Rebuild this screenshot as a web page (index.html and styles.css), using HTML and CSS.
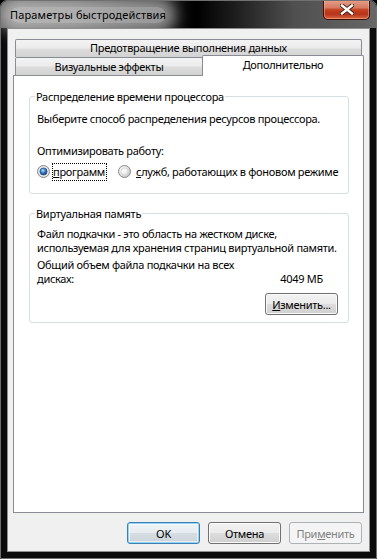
FILE: index.html
```html
<!DOCTYPE html>
<html lang="ru">
<head>
<meta charset="utf-8">
<title>Параметры быстродействия</title>
<link rel="stylesheet" href="styles.css">
</head>
<body>
<div class="window">
  <div class="titlebar">
    <span class="title">Параметры быстродействия</span>
    <div class="close">
      <svg width="14" height="11" viewBox="0 0 14 11">
        <path d="M2 1.5 L12 9.5 M12 1.5 L2 9.5" stroke="#3a1a14" stroke-width="4.2" stroke-linecap="square"/>
        <path d="M2 1.5 L12 9.5 M12 1.5 L2 9.5" stroke="#ffffff" stroke-width="2.4" stroke-linecap="square"/>
      </svg>
    </div>
  </div>
  <div class="client">
    <div class="tabs">
      <div class="tabrow">
        <div class="tab tab-wide">Предотвращение выполнения данных</div>
      </div>
      <div class="tabrow">
        <div class="tab tab-visual">Визуальные эффекты</div>
        <div class="tab tab-active">Дополнительно</div>
      </div>
    </div>
    <div class="panel">
      <fieldset class="group group-cpu">
        <legend>Распределение времени процессора</legend>
        <p class="line line-choose">Выберите способ распределения ресурсов процессора.</p>
        <p class="line line-opt">Оптимизировать работу:</p>
        <div class="radios">
          <div class="radio">
            <svg class="radio-icon" width="13" height="13" viewBox="0 0 13 13">
              <defs>
                <radialGradient id="rgA" cx="50%" cy="50%" r="55%">
                  <stop offset="0" stop-color="#ffffff"/>
                  <stop offset="0.7" stop-color="#e9e9e9"/>
                  <stop offset="1" stop-color="#c9c9c9"/>
                </radialGradient>
                <radialGradient id="dotA" cx="42%" cy="35%" r="65%">
                  <stop offset="0" stop-color="#b9e4fb"/>
                  <stop offset="0.45" stop-color="#3d8ad0"/>
                  <stop offset="1" stop-color="#163a78"/>
                </radialGradient>
              </defs>
              <circle cx="6.5" cy="6.5" r="6" fill="url(#rgA)" stroke="#8b8b8b"/>
              <circle cx="6.5" cy="6.5" r="3.6" fill="url(#dotA)" stroke="#1c3f7a" stroke-width="0.6"/>
            </svg>
            <span class="radio-text focus"><span class="acc">п</span>рограмм</span>
          </div>
          <div class="radio radio-second">
            <svg class="radio-icon" width="13" height="13" viewBox="0 0 13 13">
              <defs>
                <radialGradient id="rgB" cx="40%" cy="40%" r="60%">
                  <stop offset="0" stop-color="#ffffff"/>
                  <stop offset="0.55" stop-color="#ececec"/>
                  <stop offset="1" stop-color="#c4c4c4"/>
                </radialGradient>
              </defs>
              <circle cx="6.5" cy="6.5" r="6" fill="url(#rgB)" stroke="#8b8b8b"/>
              <circle cx="6.5" cy="6.5" r="3.6" fill="none" stroke="#d0d0d0" stroke-width="0.8"/>
            </svg>
            <span class="radio-text"><span class="acc">с</span>лужб, работающих в фоновом режиме</span>
          </div>
        </div>
      </fieldset>
      <fieldset class="group group-vm">
        <legend>Виртуальная память</legend>
        <p class="line line-desc">Файл подкачки - это область на жестком диске,<br>используемая для хранения страниц виртуальной памяти.</p>
        <div class="total">
          <p class="line">Общий объем файла подкачки на всех<br>дисках:</p>
          <p class="line total-value">4049 МБ</p>
        </div>
        <div class="change-row">
          <button class="btn btn-change" type="button"><span class="acc">И</span>зменить...</button>
        </div>
      </fieldset>
    </div>
    <div class="actions">
      <button class="btn btn-default" type="button">OK</button>
      <button class="btn" type="button">Отмена</button>
      <button class="btn btn-disabled" type="button">При<span class="acc">м</span>енить</button>
    </div>
  </div>
</div>
</body>
</html>
```
FILE: styles.css
```css
* { box-sizing: border-box; }
html, body { margin: 0; padding: 0; }
body {
  width: 377px;
  height: 559px;
  overflow: hidden;
  background: #000;
  font-family: "Noto Sans", "DejaVu Sans", sans-serif;
  font-size: 11px;
  letter-spacing: -0.3px;
  color: #000;
}
.window {
  width: 377px;
  height: 559px;
  display: flex;
  flex-direction: column;
  border: 1px solid #707070;
  border-radius: 7px 7px 0 0;
  background: #0c0c0c;
  overflow: hidden;
}
.titlebar {
  height: 27px;
  display: flex;
  align-items: flex-start;
  padding-left: 9px;
  background: linear-gradient(to right, #5d5d5d 0%, #4a4a4a 20%, #151515 44%, #000 52%, #1c1c1c 62%, #4f4f4f 78%, #676767 100%);
}
.title {
  margin-top: 6px;
  line-height: 16px;
  font-size: 11px;
  letter-spacing: 0.15px;
  color: #000;
  background: rgba(255,255,255,0.55);
  border-radius: 10px;
  box-shadow: 0 0 14px 10px rgba(255,255,255,0.5);
}
.close {
  margin-left: auto;
  margin-right: 6px;
  margin-top: -1px;
  width: 47px;
  height: 20px;
  border: 1px solid #431008;
  border-top: none;
  border-radius: 0 0 5px 5px;
  background: linear-gradient(#e6a08c 0%, #d67b62 40%, #c4401f 52%, #b8341a 75%, #d56a43 100%);
  box-shadow: inset 0 0 0 1px rgba(255,190,170,0.45);
  display: flex;
  align-items: center;
  justify-content: center;
}
.client {
  flex: 1;
  margin: 0 6px 6px 6px;
  border: 1px solid #8e8e8e;
  background: #f0f0f0;
  padding: 10px 5px 0 5px;
  display: flex;
  flex-direction: column;
}
.tabs {
  display: flex;
  flex-direction: column;
}
.tabrow {
  display: flex;
  padding: 0 2px;
}
.tab {
  height: 18px;
  line-height: 16px;
  text-align: center;
  border: 1px solid #898c95;
  border-bottom: none;
  background: linear-gradient(#f3f3f3 0%, #ebebeb 48%, #dddddd 52%, #d2d2d2 100%);
  white-space: nowrap;
}
.tab-wide { flex: 1; border-radius: 2px 2px 0 0; }
.tab-visual { width: 188px; border-radius: 2px 2px 0 0; height: 18px; line-height: 17px; }
.tab-active {
  flex: 1;
  margin: -2px -2px -1px -1px;
  height: 21px;
  line-height: 17px;
  background: #fff;
  border-radius: 2px 2px 0 0;
  position: relative;
  z-index: 1;
}
.panel {
  height: 438px;
  background: #fff;
  border: 1px solid #898c95;
  padding: 13px 14px 0 15px;
}
.group {
  margin: 0;
  border: 1px solid #d5dfe5;
  border-radius: 3px;
  padding: 0 7px 0 7px;
  min-width: 0;
}
.group legend {
  padding: 0 1px;
  margin-left: -2px;
  line-height: 15px;
}
.line {
  margin: 0;
  line-height: 13.5px;
  white-space: nowrap;
}
.group-cpu { padding-bottom: 12px; }
.line-choose { margin-top: 8px; }
.line-opt { margin-top: 18.5px; }
.radios {
  display: flex;
  align-items: center;
  margin-top: 5px;
  white-space: nowrap;
}
.radio {
  display: flex;
  align-items: center;
  gap: 2px;
  flex: none;
}
.radio-icon { flex: none; }
.radio-text {
  border: 1px dotted transparent;
  padding: 0 1px 1px 0;
  line-height: 15px;
  white-space: nowrap;
}
.radio-text.focus { border-color: #000; }
.radio-second { margin-left: 11px; gap: 4px; }
.acc { text-decoration: underline; text-underline-offset: 1px; }
.group-vm { margin-top: 12px; padding-bottom: 7px; }
.line-desc { margin-top: 6.5px; }
.total {
  display: flex;
  align-items: flex-end;
  margin-top: 4px;
}
.total-value { margin-left: auto; margin-right: 18px; }
.change-row {
  display: flex;
  justify-content: flex-end;
  margin-top: 8px;
  padding-right: 3px;
}
.btn {
  width: 73px;
  height: 22px;
  padding: 0;
  font: inherit;
  letter-spacing: inherit;
  color: #000;
  border: 1px solid #707070;
  border-radius: 3px;
  background: linear-gradient(#f2f2f2 0%, #ebebeb 48%, #dddddd 52%, #cfcfcf 100%);
  box-shadow: inset 0 0 0 1px #fbfbfb;
}
.btn-default {
  border-color: #3c7fb1;
  box-shadow: inset 0 0 0 1px #93d3f6, inset 0 0 0 2px rgba(255,255,255,0.6);
  background: linear-gradient(#eef3f6 0%, #e6ecf0 48%, #d6dde2 52%, #ccd4da 100%);
}
.btn-disabled {
  border-color: #adb2b5;
  background: #f4f4f4;
  color: #838383;
  box-shadow: none;
}
.actions {
  display: flex;
  justify-content: flex-end;
  gap: 8px;
  margin-top: 9px;
  padding-right: 2px;
}
```
